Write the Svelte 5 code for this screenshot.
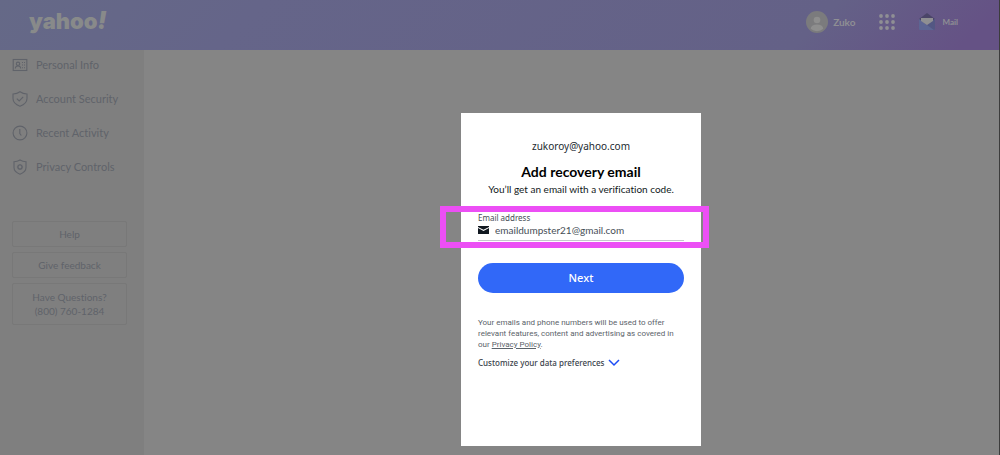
<script lang="ts">
  const links = [
    { label: 'Personal Info', icon: 'card' },
    { label: 'Account Security', icon: 'check' },
    { label: 'Recent Activity', icon: 'clock' },
    { label: 'Privacy Controls', icon: 'gear' }
  ];
  let email = $state('emaildumpster21@gmail.com');
</script>

<div class="page">
  <header>
    <a class="logo" href="#home" aria-label="yahoo!">yahoo<i>!</i></a>
    <div class="tools">
      <a class="user" href="#profile">
        <svg width="22" height="22" viewBox="0 0 22 22" aria-hidden="true">
          <circle cx="11" cy="11" r="11" fill="#7b7b7d" />
          <circle cx="11" cy="9" r="3.3" fill="#8e8e8e" />
          <path d="M4.7 17.8c.4-3 2.700-4.300 6.300-4.300s5.900 1.300 6.300 4.300a9.300 9.300 0 0 1-12.600 0z" fill="#8e8e8e" />
        </svg>
        <span>Zuko</span>
      </a>
      <button class="apps" aria-label="Apps">
        <svg width="16" height="16" viewBox="0 0 16 16" fill="#8f8f94">
          {#each [2, 8, 14] as cy}
            {#each [2, 8, 14] as cx}
              <circle {cx} {cy} r="1.900" />
            {/each}
          {/each}
        </svg>
      </button>
      <a class="mail" href="#mail">
        <svg width="16" height="18" viewBox="0 0 16 18" aria-hidden="true">
          <path d="M0 6 8 0l8 6-2 3H2z" fill="#4b4568" />
          <path d="M0 6l8 6 8-6v10a1 1 0 0 1-1 1H1a1 1 0 0 1-1-1z" fill="#5d6593" />
          <path d="M8 12l8-6v10a1 1 0 0 1-1 1z" fill="#535783" />
          <path d="M2 5h12v3l-6 4-6-4z" fill="#8f8f92" />
        </svg>
        <span>Mail</span>
      </a>
    </div>
  </header>

  <div class="body">
    <aside>
      <nav>
        {#each links as link}
          <a href="#{link.icon}">
            <svg width="16" height="16" viewBox="0 0 16 16" fill="none" stroke="#60636a" stroke-width="1.1" aria-hidden="true">
              {#if link.icon === 'card'}
                <rect x="1.200" y="2.500" width="13.600" height="11" />
                <circle cx="6" cy="6.800" r="1.700" />
                <path d="M3.300 11.500c0-1.700 1-2.500 2.700-2.500s2.700.8 2.700 2.500M10 5.500h1m1 0h1M10 8h1m1 0h1M10 10.700h1m1 0h1" />
              {:else if link.icon === 'check'}
                <path d="M8 .8C6 2.300 3.500 3 1 3v4.500c0 3.500 2.500 6 7 7.700 4.500-1.700 7-4.200 7-7.700V3C12.500 3 10 2.300 8 .8zM4.800 7.600l2.400 2.400 4-4.200" />
              {:else if link.icon === 'clock'}
                <circle cx="8" cy="8" r="6.900" />
                <path d="M7.800 4v4.500l1.500 2" />
              {:else}
                <path d="M8 1C6 2.200 4.200 2.700 2 2.800v5.700c0 3 2 5.200 6 6.700 4-1.500 6-3.700 6-6.700V2.800C11.800 2.700 10 2.200 8 1z" />
                <circle cx="8" cy="8" r="2" />
                <path d="M8 4.900v1.100m0 4v1.100M4.900 8h1.100m4 0h1.100M5.800 5.800l.8.8m2.800 2.800.8.800m0-4.400-.8.800M6.600 9.400l-.8.800" />
              {/if}
            </svg>
            {link.label}
          </a>
        {/each}
      </nav>
      <div class="help">
        <button>Help</button>
        <button>Give feedback</button>
        <button>Have Questions?<br />(800) 760-1284</button>
      </div>
    </aside>
    <main></main>
  </div>

  <div class="overlay">
    <section class="dialog" role="dialog" aria-labelledby="title">
      <p class="account">zukoroy@yahoo.com</p>
      <h1 id="title">Add recovery email</h1>
      <p class="lead">You’ll get an email with a verification code.</p>
      <div class="field">
        <label for="email">Email address</label>
        <div class="entry">
          <svg width="11" height="8" viewBox="0 0 11 8" aria-hidden="true">
            <path d="M0 0h11v1L5.500 3.800 0 1z" fill="#111820" />
            <path d="M0 2l5.500 3L11 2v6H0z" fill="#111820" />
          </svg>
          <input id="email" type="email" bind:value={email} />
        </div>
        <div class="highlight"></div>
      </div>
      <button class="next">Next</button>
      <p class="legal">Your emails and phone numbers will be used to offer relevant features, content and advertising as covered in our <a href="#privacy">Privacy Policy</a>.</p>
      <button class="prefs">
        Customize your data preferences
        <svg width="12" height="8" viewBox="0 0 12 8" fill="none" stroke="#1c4cf5" stroke-width="1.500" aria-hidden="true">
          <path d="M1 1l5 5 5-5" />
        </svg>
      </button>
    </section>
  </div>
</div>

<style>
  * { box-sizing: border-box; }
  :global(body) { margin: 0; background: #858585; }
  .page {
    position: relative;
    display: flex;
    flex-direction: column;
    min-height: 100vh;
    border-right: 1px solid #3c3c3c;
    background: #858585;
    font-family: Lato, "Noto Sans", sans-serif;
    font-size: 10px;
    line-height: 14px;
    font-variant-ligatures: none;
  }
  a { color: inherit; text-decoration: none; }
  button { padding: 0; border: 0; background: none; font: inherit; color: inherit; }
  svg { display: block; flex: none; }
  p, h1 { margin: 0; }

  header {
    display: flex;
    align-items: center;
    justify-content: space-between;
    height: 50px;
    padding: 0 41px 6px 29px;
    background: linear-gradient(135deg, #656987 0%, #656589 25%, #646187 80%, #655285 96%);
    color: #8f8f94;
  }
  .logo {
    margin-bottom: 2px;
    font-family: Inter, sans-serif;
    font-size: 22px;
    font-weight: 900;
    line-height: 24px;
    color: #888a8a;
  }
  .logo i { font-size: 24px; }
  .tools, .user, .mail { display: flex; align-items: center; }
  .tools { gap: 24px; font-weight: 700; }
  .user { gap: 5px; }
  .mail { gap: 7px; font-size: 8px; }

  .body { display: flex; flex: 1; }
  main { flex: 1; }
  aside { width: 144px; padding: 5px 17px 0 12px; background: #7f7f7f; color: #60636a; }
  nav { display: flex; flex-direction: column; gap: 14px; font-size: 11px; }
  nav a { display: flex; align-items: center; gap: 8px; height: 20px; white-space: nowrap; }
  .help { display: flex; flex-direction: column; gap: 5px; margin-top: 44px; }
  .help button { padding: 5px 0; border: 1px solid #787878; border-radius: 2px; }
  .help button:last-child { padding: 6px 0; }

  .overlay {
    position: absolute;
    inset: 0;
    display: flex;
    justify-content: center;
    align-items: flex-end;
    padding: 0 0 9px 163px;
  }
  .dialog {
    display: flex;
    flex-direction: column;
    width: 240px;
    min-height: 333px;
    padding: 26px 17px;
    background: #fff;
    color: #111820;
    text-align: center;
  }
  h1 { margin-top: 9px; font-size: 14px; font-weight: 700; line-height: 20px; color: #000; }
  .account { font-family: "Noto Sans", sans-serif; color: #232a31; }
  .lead { white-space: nowrap; }
  .field {
    position: relative;
    margin-top: 17px;
    border-bottom: 1px solid #c4c7cc;
    text-align: left;
  }
  .field label { display: block; font-family: "Noto Sans", sans-serif; font-size: 8px; line-height: 10px; color: #464e56; }
  .entry { display: flex; align-items: center; gap: 6px; height: 17px; padding-bottom: 3px; }
  .entry input {
    flex: 1;
    min-width: 0;
    padding: 0;
    border: 0;
    outline: 0;
    background: none;
    font: inherit;
    color: #464e56;
  }
  .highlight {
    position: absolute;
    inset: -7px -25px -8px -38px;
    border: 6px solid #ec4ff5;
    pointer-events: none;
  }
  .next {
    height: 30px;
    margin-top: 22px;
    border-radius: 15px;
    background: #3168f8;
    color: #fff;
    font-family: "Noto Sans", sans-serif;
    font-weight: 500;
    font-size: 11px;
  }
  .legal {
    margin-top: 24px;
    font-family: Roboto, sans-serif;
    font-size: 8px;
    line-height: 11px;
    text-align: left;
    color: #5b636a;
  }
  .legal a { text-decoration: underline; }
  .prefs {
    display: flex;
    align-items: center;
    gap: 4px;
    margin-top: 6px;
    font-family: "Noto Sans", sans-serif;
    font-size: 8px;
    font-weight: 500;
    color: #3a434b;
  }
</style>
